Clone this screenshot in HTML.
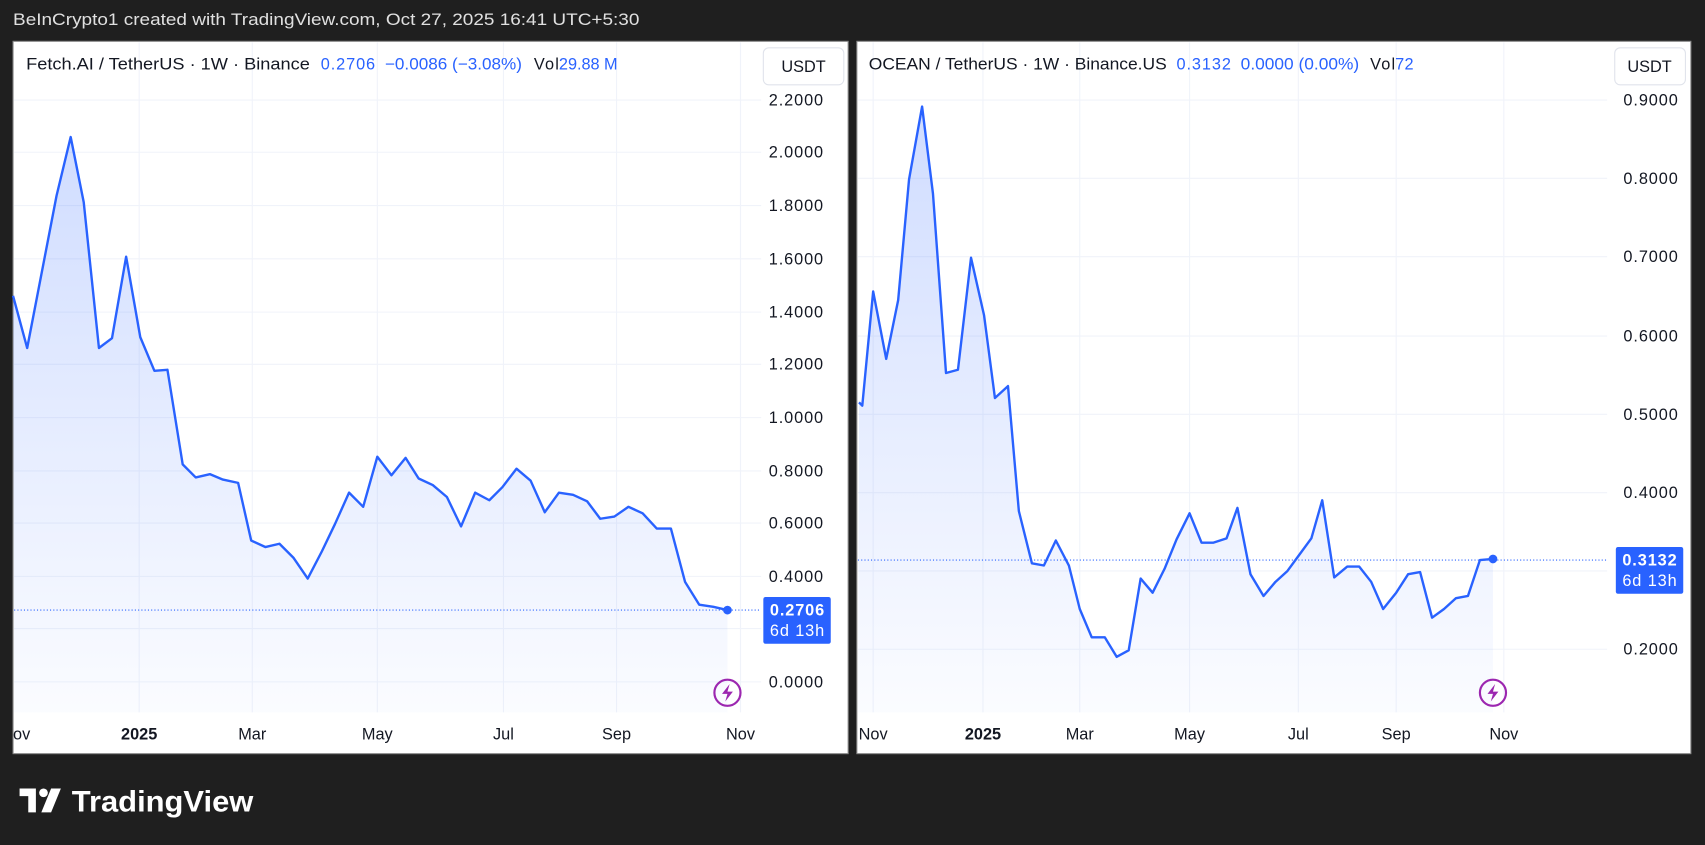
<!DOCTYPE html>
<html><head><meta charset="utf-8"><style>
html,body{margin:0;padding:0;background:#1f1f1f;width:1705px;height:845px;overflow:hidden}
#w{position:absolute;left:0;top:0;width:1568px;height:777px;transform:scale(1.08737,1.08752);transform-origin:0 0;font-family:"Liberation Sans",sans-serif}
</style></head><body><div id="w">
<svg width="1568" height="777" style="position:absolute;left:0;top:0" font-family="Liberation Sans, sans-serif">
<defs>
<linearGradient id="g" x1="0" y1="0" x2="0" y2="1"><stop offset="0" stop-color="#2962ff" stop-opacity="0.22"/><stop offset="1" stop-color="#2962ff" stop-opacity="0.02"/></linearGradient>
</defs>
<text x="12" y="23" font-size="15" fill="#e0e0e0" textLength="576" lengthAdjust="spacingAndGlyphs">BeInCrypto1 created with TradingView.com, Oct 27, 2025 16:41 UTC+5:30</text>
<!-- left panel -->
<rect x="12" y="38" width="768" height="655" fill="#fff" stroke="#888" stroke-width="1"/>
<g stroke="#f0f3fa" stroke-width="1">
<line x1="128" y1="39" x2="128" y2="655"/><line x1="232" y1="39" x2="232" y2="655"/><line x1="347" y1="39" x2="347" y2="655"/><line x1="463" y1="39" x2="463" y2="655"/><line x1="567" y1="39" x2="567" y2="655"/><line x1="681" y1="39" x2="681" y2="655"/>
<line x1="13" y1="92" x2="700" y2="92"/><line x1="13" y1="140" x2="700" y2="140"/><line x1="13" y1="189" x2="700" y2="189"/><line x1="13" y1="238" x2="700" y2="238"/><line x1="13" y1="287" x2="700" y2="287"/><line x1="13" y1="335" x2="700" y2="335"/><line x1="13" y1="384" x2="700" y2="384"/><line x1="13" y1="433" x2="700" y2="433"/><line x1="13" y1="481" x2="700" y2="481"/><line x1="13" y1="530" x2="700" y2="530"/><line x1="13" y1="578" x2="700" y2="578"/><line x1="13" y1="627" x2="700" y2="627"/>
</g>
<polygon fill="url(#g)" points="13,655 12,272 25,320 52,180 65,126 77,186 91,320 103,311 116,236 129,310 142,341 154,340 168,427 180,439 193,436 205,441 219,444 231,497 244,503 257,500 270,513 283,532 296,507 308,482 321,453 334,466 347,420 360,437 373,421 385,440 398,446 411,457 424,484 437,453 450,460 462,448 475,431 488,442 501,471 514,453 527,455 540,461 552,477 565,475 578,466 591,472 604,486 617,486 630,535 643,556 656,558 669,561 669,655"/>
<polyline fill="none" stroke="#2962ff" stroke-width="2.2" stroke-linejoin="round" points="12,272 25,320 52,180 65,126 77,186 91,320 103,311 116,236 129,310 142,341 154,340 168,427 180,439 193,436 205,441 219,444 231,497 244,503 257,500 270,513 283,532 296,507 308,482 321,453 334,466 347,420 360,437 373,421 385,440 398,446 411,457 424,484 437,453 450,460 462,448 475,431 488,442 501,471 514,453 527,455 540,461 552,477 565,475 578,466 591,472 604,486 617,486 630,535 643,556 656,558 669,561"/>
<line x1="13" y1="561" x2="700" y2="561" stroke="#2962ff" stroke-dasharray="1,2" stroke-width="1"/>
<circle cx="669" cy="561" r="4" fill="#2962ff"/>
<g font-size="15" fill="#131722">
<g textLength="50" lengthAdjust="spacingAndGlyphs">
<text x="707" y="97" textLength="50">2.2000</text><text x="707" y="145" textLength="50">2.0000</text><text x="707" y="194" textLength="50">1.8000</text><text x="707" y="243" textLength="50">1.6000</text><text x="707" y="292" textLength="50">1.4000</text><text x="707" y="340" textLength="50">1.2000</text><text x="707" y="389" textLength="50">1.0000</text><text x="707" y="438" textLength="50">0.8000</text><text x="707" y="486" textLength="50">0.6000</text><text x="707" y="535" textLength="50">0.4000</text><text x="707" y="632" textLength="50">0.0000</text>
</g>
<text x="12" y="680">ov</text><text x="128" y="680" text-anchor="middle" font-weight="bold">2025</text><text x="232" y="680" text-anchor="middle">Mar</text><text x="347" y="680" text-anchor="middle">May</text><text x="463" y="680" text-anchor="middle">Jul</text><text x="567" y="680" text-anchor="middle">Sep</text><text x="681" y="680" text-anchor="middle">Nov</text>
</g>
<rect x="702" y="549" width="62" height="43" rx="2" fill="#2962ff"/>
<text x="708" y="566" fill="#fff" font-size="15" font-weight="bold" textLength="50">0.2706</text>
<text x="708" y="585" fill="#fff" font-size="15" textLength="50">6d 13h</text>
<rect x="702" y="44" width="74" height="34" rx="5" fill="#fff" stroke="#e0e3eb"/>
<text x="739" y="66" font-size="15" fill="#131722" text-anchor="middle">USDT</text>
<circle cx="669" cy="637" r="12" fill="none" stroke="#9c27b0" stroke-width="2"/>
<path d="M671,629 L664,638 L669,638 L667,645 L674,636 L669,636 Z" fill="#9c27b0"/>
<text x="24" y="64" font-size="15" fill="#131722" textLength="261" lengthAdjust="spacingAndGlyphs">Fetch.AI / TetherUS · 1W · Binance</text>
<text x="295" y="64" font-size="15" fill="#2962ff" textLength="50">0.2706</text>
<text x="354" y="64" font-size="15" fill="#2962ff" textLength="126" lengthAdjust="spacingAndGlyphs">−0.0086 (−3.08%)</text>
<text x="491" y="64" font-size="15" fill="#131722" textLength="23">Vol</text>
<text x="514" y="64" font-size="15" fill="#2962ff" textLength="54">29.88 M</text>

<!-- right panel -->
<rect x="788" y="38" width="767" height="655" fill="#fff" stroke="#888" stroke-width="1"/>
<g stroke="#f0f3fa" stroke-width="1">
<line x1="803" y1="39" x2="803" y2="655"/><line x1="904" y1="39" x2="904" y2="655"/><line x1="993" y1="39" x2="993" y2="655"/><line x1="1094" y1="39" x2="1094" y2="655"/><line x1="1194" y1="39" x2="1194" y2="655"/><line x1="1284" y1="39" x2="1284" y2="655"/><line x1="1383" y1="39" x2="1383" y2="655"/>
<line x1="789" y1="92" x2="1478" y2="92"/><line x1="789" y1="164" x2="1478" y2="164"/><line x1="789" y1="236" x2="1478" y2="236"/><line x1="789" y1="309" x2="1478" y2="309"/><line x1="789" y1="381" x2="1478" y2="381"/><line x1="789" y1="453" x2="1478" y2="453"/><line x1="789" y1="525" x2="1478" y2="525"/><line x1="789" y1="597" x2="1478" y2="597"/>
</g>
<polygon fill="url(#g)" points="789,655 790,370 793,373 803,268 815,330 826,276 836,165 848,98 858,178 870,343 881,340 893,237 905,290 915,366 927,355 937,470 949,518 960,520 971,497 983,520 993,560 1004,586 1016,586 1027,604 1038,598 1049,532 1060,545 1071,523 1082,496 1094,472 1105,499 1116,499 1128,495 1138,467 1150,528 1162,548 1173,535 1184,525 1195,510 1206,495 1216,460 1227,531 1239,521 1250,521 1261,535 1272,560 1284,545 1295,528 1306,526 1317,568 1328,560 1339,550 1350,548 1361,515 1373,514 1373,655"/>
<polyline fill="none" stroke="#2962ff" stroke-width="2.2" stroke-linejoin="round" points="790,370 793,373 803,268 815,330 826,276 836,165 848,98 858,178 870,343 881,340 893,237 905,290 915,366 927,355 937,470 949,518 960,520 971,497 983,520 993,560 1004,586 1016,586 1027,604 1038,598 1049,532 1060,545 1071,523 1082,496 1094,472 1105,499 1116,499 1128,495 1138,467 1150,528 1162,548 1173,535 1184,525 1195,510 1206,495 1216,460 1227,531 1239,521 1250,521 1261,535 1272,560 1284,545 1295,528 1306,526 1317,568 1328,560 1339,550 1350,548 1361,515 1373,514"/>
<line x1="789" y1="515" x2="1478" y2="515" stroke="#2962ff" stroke-dasharray="1,2" stroke-width="1"/>
<circle cx="1373" cy="514" r="4" fill="#2962ff"/>
<g font-size="15" fill="#131722">
<text x="1493" y="97" textLength="50">0.9000</text><text x="1493" y="169" textLength="50">0.8000</text><text x="1493" y="241" textLength="50">0.7000</text><text x="1493" y="314" textLength="50">0.6000</text><text x="1493" y="386" textLength="50">0.5000</text><text x="1493" y="458" textLength="50">0.4000</text><text x="1493" y="602" textLength="50">0.2000</text>
<text x="803" y="680" text-anchor="middle">Nov</text><text x="904" y="680" text-anchor="middle" font-weight="bold">2025</text><text x="993" y="680" text-anchor="middle">Mar</text><text x="1094" y="680" text-anchor="middle">May</text><text x="1194" y="680" text-anchor="middle">Jul</text><text x="1284" y="680" text-anchor="middle">Sep</text><text x="1383" y="680" text-anchor="middle">Nov</text>
</g>
<rect x="1486" y="503" width="62" height="43" rx="2" fill="#2962ff"/>
<text x="1492" y="520" fill="#fff" font-size="15" font-weight="bold" textLength="50">0.3132</text>
<text x="1492" y="539" fill="#fff" font-size="15" textLength="50">6d 13h</text>
<rect x="1485" y="44" width="65" height="34" rx="5" fill="#fff" stroke="#e0e3eb"/>
<text x="1517" y="66" font-size="15" fill="#131722" text-anchor="middle">USDT</text>
<circle cx="1373" cy="637" r="12" fill="none" stroke="#9c27b0" stroke-width="2"/>
<path d="M1375,629 L1368,638 L1373,638 L1371,645 L1378,636 L1373,636 Z" fill="#9c27b0"/>
<text x="799" y="64" font-size="15" fill="#131722" textLength="274" lengthAdjust="spacingAndGlyphs">OCEAN / TetherUS · 1W · Binance.US</text>
<text x="1082" y="64" font-size="15" fill="#2962ff" textLength="50">0.3132</text>
<text x="1141" y="64" font-size="15" fill="#2962ff" textLength="109" lengthAdjust="spacingAndGlyphs">0.0000 (0.00%)</text>
<text x="1260" y="64" font-size="15" fill="#131722" textLength="23">Vol</text>
<text x="1283" y="64" font-size="15" fill="#2962ff" textLength="17">72</text>

<!-- footer logo -->
<path d="M18,725 H33 V747 H26 V732 H18 Z" fill="#fff"/>
<circle cx="40" cy="729" r="4" fill="#fff"/>
<path d="M47,725 H56 L47,747 H38 Z" fill="#fff"/>
<text x="66" y="746" font-size="27" font-weight="bold" fill="#fff" textLength="167" lengthAdjust="spacingAndGlyphs">TradingView</text>
</svg>
</div></body></html>
